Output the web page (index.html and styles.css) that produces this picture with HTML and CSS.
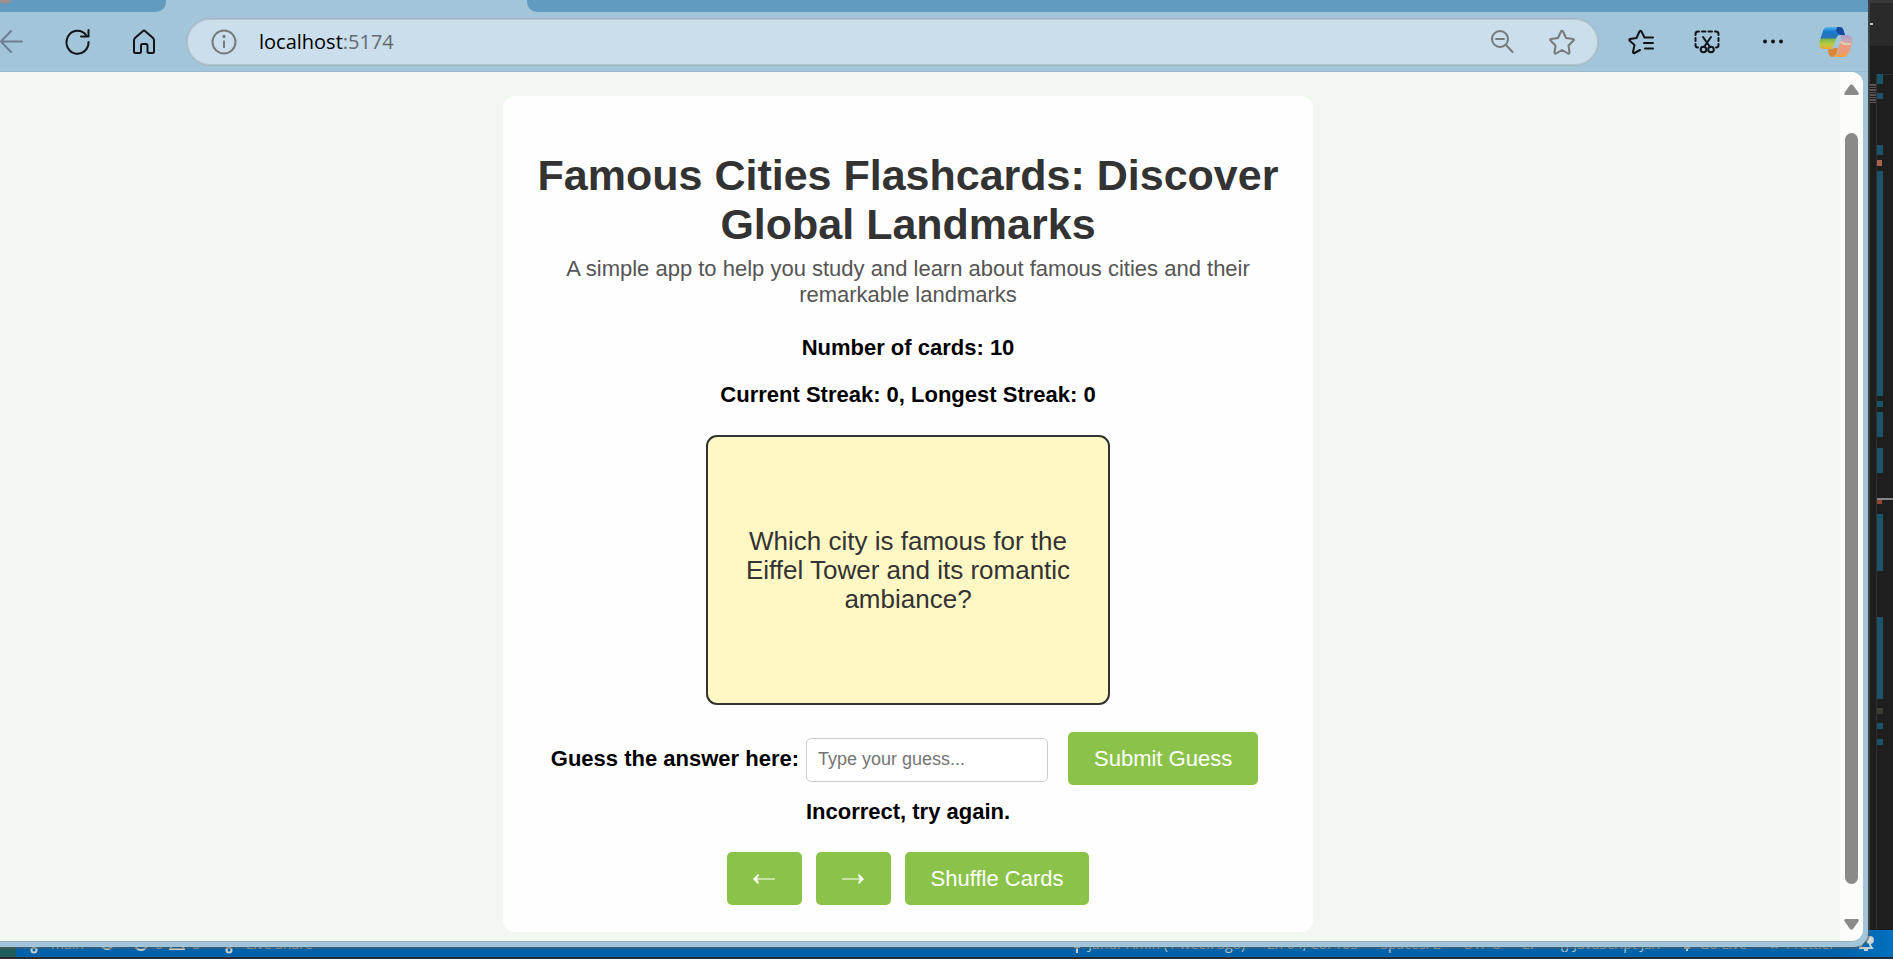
FILE: index.html
```html
<!DOCTYPE html>
<html lang="en">
<head>
<meta charset="utf-8">
<title>Famous Cities Flashcards</title>
<link rel="stylesheet" href="styles.css">
</head>
<body>
<div class="desktop">
  <div class="editor">
    <div class="editor-body">
      <svg class="minimap" width="23" height="930" viewBox="0 0 23 930" aria-hidden="true">
        <path fill="#2a2a2b" d="M0 0h23v46H0z"/>
        <path fill="#383838" d="M0 0h23v3H0z"/>
        <path stroke="#303030" d="M6.500 74V930M7 74.500h16"/>
        <path fill="#c8c8c8" d="M0 23h3v2H0z"/>
        <path stroke="#5a5552" stroke-width="6" stroke-dasharray="2 1 1 1" d="M3 84v20"/>
        <path fill="#1b5468" d="M7 74h6v10H7zM7 93h6v6H7zM7 145h6v10H7zM7 171h6v225H7zM7 401h6v6H7zM7 412h6v25H7zM7 448h6v25H7zM7 514h6v57H7zM7 617h6v82H7zM7 723h6v6H7zM7 739h6v6H7z"/>
        <path fill="#a8624a" d="M7 160h5v6H7z"/>
        <path fill="#94462f" d="M7 500h5v4H7z"/>
        <path fill="#3b3c31" d="M7 708h6v6H7z"/>
        <path fill="#85858c" d="M7 498h16v2H7z"/>
      </svg>
    </div>
    <footer class="status">
      <span class="remote"></span>
      <svg width="14" height="22" viewBox="0 0 14 22" class="st-icon" aria-hidden="true"><circle cx="4" cy="17" r="2.500"/><path d="M4 14V6M4 11q6 0 6-5"/></svg>
      <span class="st-branch">main</span>
      <svg width="14" height="22" viewBox="0 0 14 22" class="st-icon st-sync" aria-hidden="true"><circle cx="7" cy="10" r="6"/></svg>
      <svg width="14" height="22" viewBox="0 0 14 22" class="st-icon" aria-hidden="true"><circle cx="7" cy="11" r="6"/></svg>
      <span>0</span>
      <svg width="16" height="22" viewBox="0 0 16 22" class="st-icon" aria-hidden="true"><path d="M8 3l7 13H1z"/></svg>
      <span class="st-warn">0</span>
      <svg width="14" height="22" viewBox="0 0 14 22" class="st-icon" aria-hidden="true"><circle cx="7" cy="17" r="2.500"/><path d="M7 14V5"/></svg>
      <span class="st-share">Live Share</span>
      <span class="st-right">
        <svg width="8" height="22" viewBox="0 0 8 22" class="st-icon" aria-hidden="true"><path d="M4 3v17M1 14h6"/></svg>
        <span class="st-author">Jaffar Amin (1 week ago)</span>
        <span class="st-pos">Ln 64, Col 103</span>
        <span class="st-pos">Spaces: 2</span>
        <span class="st-pos">UTF-8</span>
        <span class="st-pos">LF</span>
        <span class="st-pos">{} JavaScript JSX</span>
        <svg width="10" height="22" viewBox="0 0 10 22" class="st-icon" aria-hidden="true"><path d="M5 5v13M1 13h8M2 15h6"/></svg>
        <span class="st-pos">Go Live</span>
        <svg width="10" height="22" viewBox="0 0 10 22" class="st-icon" aria-hidden="true"><path d="M1 11l3 4M5 11l3 4"/></svg>
        <span class="st-pos">Prettier</span>
        <svg width="18" height="22" viewBox="0 0 18 22" class="st-icon" aria-hidden="true"><path d="M3 14l2-3V8a4 4 0 018 0v4l2 3H3zM7 17h4"/><circle cx="13" cy="7" r="3" fill="#d3dfdf"/></svg>
      </span>
    </footer>
  </div>

  <div class="browser">
    <div class="tabs">
      <span class="tab-left"></span>
      <span class="tab-active"></span>
      <span class="tab-rest"></span>
    </div>
    <header class="toolbar">
      <button class="tool back" aria-label="Back"><svg width="24" height="28" viewBox="0 0 24 28"><path d="M22 13.500H1M11 3L1 13.500 11 24"/></svg></button>
      <button class="tool reload" aria-label="Refresh"><svg width="28" height="28" viewBox="0 0 28 28"><path d="M24.500 14A11 11.500 0 1 1 22 7M24.500 2V8.500H17"/></svg></button>
      <button class="tool home" aria-label="Home"><svg width="28" height="28" viewBox="0 0 28 28"><path d="M4 12.500Q4 11 5 10L13 3Q14 2 15 3L23 10Q24 11 24 12.500V23.500Q24 25 22.500 25H19Q17.500 25 17.500 23.500V18Q17.500 16 16 16H12.500Q11 16 11 18V23.500Q11 25 9.500 25H5.500Q4 25 4 23.500Z"/></svg></button>
      <div class="address">
        <svg class="muted" width="26" height="26" viewBox="0 0 26 26" aria-hidden="true"><circle cx="13" cy="13" r="11.500"/><path d="M13 11.500V19"/><circle cx="13" cy="7.500" r=".7"/></svg>
        <div class="url">localhost<span class="port">:5174</span></div>
        <button class="tool muted" aria-label="Zoom out"><svg width="28" height="28" viewBox="0 0 28 28"><circle cx="12" cy="11" r="8"/><path d="M18 17l6.500 7M8 11h8"/></svg></button>
        <button class="tool muted star" aria-label="Add to favorites"><svg width="28" height="28" viewBox="0 0 28 28"><path d="M13 3.500Q14 2 15 3.500L18 10L25 11Q26.500 11.500 25.500 12.500L20.500 17.500L21.500 24.500Q21.500 26 20 25.500L14 22L8 25.500Q6.500 26 6.500 24.500L7.500 17.500L2.500 12.500Q1.500 11.500 3 11L10 10Z"/></svg></button>
      </div>
      <div class="actions">
        <button class="tool" aria-label="Favorites"><svg width="28" height="28" viewBox="0 0 28 28"><path d="M13 22L7.500 25Q6 25.500 6 24L7.500 17L2.500 12.500Q2 11.500 3 11L9.500 10L12.500 3.500Q13.500 2 14.500 3.500L17.500 9.500H26M17 15H26M18 20.500H26"/></svg></button>
        <button class="tool" aria-label="Screenshot"><svg width="28" height="28" viewBox="0 0 28 28"><path d="M2.500 7V6Q2.500 3.500 5 3.500H6M9 3.500H12.500M15.500 3.500H19M22 3.500H23Q25.500 3.500 25.500 6V7M25.500 10V13M25.500 16V17Q25.500 19.500 23 19.500M2.500 10V13M2.500 16V17Q2.500 19.500 5 19.500M10 9L17 19M18 9L11 19"/><circle cx="10.500" cy="21.500" r="2.800"/><circle cx="18" cy="21.500" r="2.800"/></svg></button>
        <button class="tool dots" aria-label="Settings and more"><svg width="28" height="28" viewBox="0 0 28 28"><circle cx="6" cy="13.500" r="2"/><circle cx="14" cy="13.500" r="2"/><circle cx="22" cy="13.500" r="2"/></svg></button>
        <button class="tool copilot" aria-label="Copilot"><svg width="34" height="32" viewBox="0 0 34 32">
          <defs>
            <linearGradient id="cp1" x2="0" y2="1"><stop offset="0" stop-color="#58b5ee"/><stop offset=".2" stop-color="#187bcb"/><stop offset=".48" stop-color="#2873b5"/><stop offset=".56" stop-color="#82b94a"/><stop offset=".78" stop-color="#b9cc3e"/><stop offset="1" stop-color="#f0a33a"/></linearGradient>
            <linearGradient id="cp2" x2="0" y2="1"><stop offset="0" stop-color="#a99dc6"/><stop offset=".3" stop-color="#c7a9b5"/><stop offset=".38" stop-color="#e99a83"/><stop offset=".75" stop-color="#ed9a76"/><stop offset="1" stop-color="#f2a442"/></linearGradient>
          </defs>
          <path fill="url(#cp1)" d="M8 1H21Q24 1 25 6L26 9H21Q18 9 17 13L14 21Q13 24 9 23H4Q-1 22 1 14L4 5Q5 1 8 1Z"/>
          <path fill="#174a9c" d="M18 1H21Q24 1 25 6L26 9H21L17 5Z"/>
          <path fill="url(#cp2)" d="M22 9H29Q35 11 33 17L30 26Q28 31 24 31H14Q18 29 19 25L22 12Z"/>
          <path fill="#d88637" d="M9 23Q13 24 15 22H19L18 26Q16 31 13 31Q9 30 9 23Z"/>
          <path fill="#ddd0ae" d="M22 15Q26 18 32 17L31 19Q25 20 21 17Z"/>
        </svg></button>
      </div>
    </header>

    <div class="viewport">
      <main class="page">
        <section class="app">
          <h1 class="title">Famous Cities Flashcards: Discover Global Landmarks</h1>
          <p class="subtitle">A simple app to help you study and learn about famous cities and their remarkable landmarks</p>
          <p class="count">Number of cards: 10</p>
          <p class="streak">Current Streak: 0, Longest Streak: 0</p>
          <div class="flashcard">Which city is famous for the Eiffel Tower and its romantic ambiance?</div>
          <form class="guess">
            <label class="guess-label" for="guess">Guess the answer here:</label>
            <input class="guess-input" id="guess" type="text" placeholder="Type your guess...">
            <button class="btn submit" type="button">Submit Guess</button>
          </form>
          <p class="feedback">Incorrect, try again.</p>
          <div class="nav">
            <button class="btn arrow" aria-label="Previous card"><svg width="22" height="12" viewBox="0 0 22 12"><path d="M22 6H2"/><path class="head" d="M0 6L5 1 6 2 4 6 6 10 5 11Z"/></svg></button>
            <button class="btn arrow" aria-label="Next card"><svg width="22" height="12" viewBox="0 0 22 12"><path d="M0 6H20"/><path class="head" d="M22 6L17 1 16 2 18 6 16 10 17 11Z"/></svg></button>
            <button class="btn">Shuffle Cards</button>
          </div>
        </section>
      </main>
      <div class="scrollbar" aria-hidden="true">
        <svg width="15" height="12" viewBox="0 0 15 12"><path d="M6 1Q7.500 0 9 1L14 8Q16 11 13 11H2Q-1 11 1 8Z"/></svg>
        <span class="thumb"></span>
        <svg width="15" height="12" viewBox="0 0 15 12"><path d="M6 11Q7.500 12 9 11L14 4Q16 1 13 1H2Q-1 1 1 4Z"/></svg>
      </div>
    </div>
  </div>
</div>
</body>
</html>
```
FILE: styles.css
```css
* { box-sizing: border-box; }

body {
  margin: 0;
  font-family: "Liberation Sans", Arial, sans-serif;
  font-size: 22px;
  line-height: 26px;
  color: #000;
}

h1, p { margin: 0; }

button {
  font: inherit;
  border: 0;
  padding: 0;
  background: none;
}

svg { display: block; flex: none; }

.desktop {
  position: relative;
  height: 100vh;
  overflow: hidden;
  background: #1e1e1e;
}

/* Editor window behind the browser */
.editor {
  height: 100%;
  display: flex;
  flex-direction: column;
  border-bottom: 2px solid #2b2b2f;
}

.editor-body {
  flex: 1;
  min-height: 0;
  display: flex;
  justify-content: flex-end;
  overflow: hidden;
}

.status {
  height: 27px;
  display: flex;
  align-items: center;
  background: linear-gradient(90deg, #0063a9 97%, #0070c0 100%);
  color: #b9c5c8;
  font-family: "Open Sans", "Noto Sans", sans-serif;
  font-size: 14px;
  line-height: 27px;
  white-space: nowrap;
}

.remote {
  width: 16px;
  align-self: stretch;
  margin-right: 8px;
  background: #1f5c5c;
}

.st-icon { fill: none; stroke: #c5d0d2; stroke-width: 2; }
.st-icon + span { margin-left: 7px; }
.status > span + .st-icon { margin-left: 6px; }
.status > .st-branch + .st-icon { margin-left: 16px; }
.st-sync { margin-right: 20px; }
.st-warn { margin-right: 16px; }
.status > .st-share { margin-left: 10px; }

.st-right {
  display: flex;
  align-items: center;
  margin-left: auto;
  padding-right: 18px;
}

.st-pos, .st-author { margin-right: 22px; }

/* Browser window */
.browser {
  position: absolute;
  inset: 0 25px 12px 0;
  display: flex;
  flex-direction: column;
  background: #a3c5d9;
  border-bottom-right-radius: 14px;
  box-shadow: 0 0 0 2px rgba(90, 95, 95, 0.55);
}

.tabs {
  height: 12px;
  display: flex;
}

.tab-left {
  width: 166px;
  background: radial-gradient(circle at 5px -5px, #a08f8a 8px, #619bbf 9px);
  border-bottom-right-radius: 10px;
}

.tab-active { width: 361px; }

.tab-rest {
  flex: 1;
  background: #619bbf;
  border-bottom-left-radius: 10px;
}

.toolbar {
  height: 60px;
  display: flex;
  align-items: center;
  padding-right: 15px;
  border-bottom: 1px solid #9cbccd;
}

.tool svg {
  fill: none;
  stroke: #101418;
  stroke-width: 2;
  stroke-linecap: round;
  stroke-linejoin: round;
}

.back { margin-right: 40px; }
.tool.back svg { stroke: #6e7f92; }
.reload { margin-right: 38px; }
.home { margin-right: 28px; }

.address {
  flex: 1;
  height: 48px;
  display: flex;
  align-items: center;
  padding: 0 22px 0 24px;
  border: 1px solid #a3b6c2;
  border-radius: 24px;
  background: #cadeeb;
  box-shadow: inset 0 0 0 1px #b3c4cf;
}

.muted, .tool.muted svg {
  fill: none;
  stroke: #77797a;
  stroke-width: 2;
}

.url {
  flex: 1;
  margin-left: 22px;
  font-family: "Open Sans", "Noto Sans", sans-serif;
  font-size: 20px;
  line-height: 28px;
}

.port { color: #666b6d; }
.star { margin-left: 32px; }

.actions {
  display: flex;
  align-items: center;
  gap: 38px;
  margin-left: 28px;
}

.tool.dots svg { fill: #101418; stroke: none; }
.tool.copilot svg { stroke: none; }
.copilot { margin-left: -6px; }

.viewport {
  flex: 1;
  min-height: 0;
  display: flex;
  margin: 0 5px 5px 0;
  border-bottom: 1px solid #8fb0c6;
  border-radius: 0 12px 12px 0;
  overflow: hidden;
  background: #f2f7f1;
}

.page {
  flex: 1;
  display: flex;
  justify-content: center;
  align-items: flex-start;
  padding: 24px 24px 0 0;
}

.app {
  width: 100%;
  max-width: 810px;
  display: flex;
  flex-direction: column;
  align-items: center;
  padding: 55px 27px 27px;
  border-radius: 12px;
  background: #fefefe;
  text-align: center;
}

.title {
  font-size: 43px;
  line-height: 49px;
  color: #333;
}

.subtitle {
  margin-top: 7px;
  padding: 0 32px;
  color: #555;
}

.count, .streak, .feedback, .guess-label { font-weight: bold; }
.count { margin-top: 27px; }
.streak { margin-top: 21px; }

.flashcard {
  width: 404px;
  height: 270px;
  display: flex;
  align-items: center;
  justify-content: center;
  margin-top: 27px;
  padding: 28px;
  border: 2px solid #333;
  border-radius: 11px;
  background: #fff8c4;
  color: #333;
  font-size: 26px;
  line-height: 29px;
}

.guess {
  display: flex;
  align-items: center;
  margin-top: 27px;
}

.guess-input {
  width: 242px;
  height: 44px;
  margin: 2px 20px 0 7px;
  padding: 0 11px;
  border: 1px solid #ccc;
  border-radius: 5px;
  background: #fff;
  font-family: inherit;
  font-size: 18px;
}

.guess-input::placeholder { color: #757575; }

.btn {
  height: 53px;
  padding: 0 26px;
  border-radius: 5px;
  background: #8bc34a;
  color: #fff;
}

.submit { margin-right: 7px; }
.feedback { margin-top: 14px; }

.nav {
  display: flex;
  gap: 14px;
  margin-top: 27px;
}

.arrow {
  display: flex;
  align-items: center;
  justify-content: center;
  width: 75px;
}

.arrow svg {
  fill: none;
  stroke: #fff;
}

.arrow .head {
  fill: #fff;
  stroke: none;
}

.scrollbar {
  width: 23px;
  display: flex;
  flex-direction: column;
  align-items: center;
  gap: 34px;
  padding: 12px 0 11px;
  background: #fcfdfb;
}

.scrollbar svg { fill: #8a8a8a; }

.thumb {
  flex: 1;
  width: 13px;
  margin-top: 3px;
  border-radius: 7px;
  background: #8a8a8a;
}
```
